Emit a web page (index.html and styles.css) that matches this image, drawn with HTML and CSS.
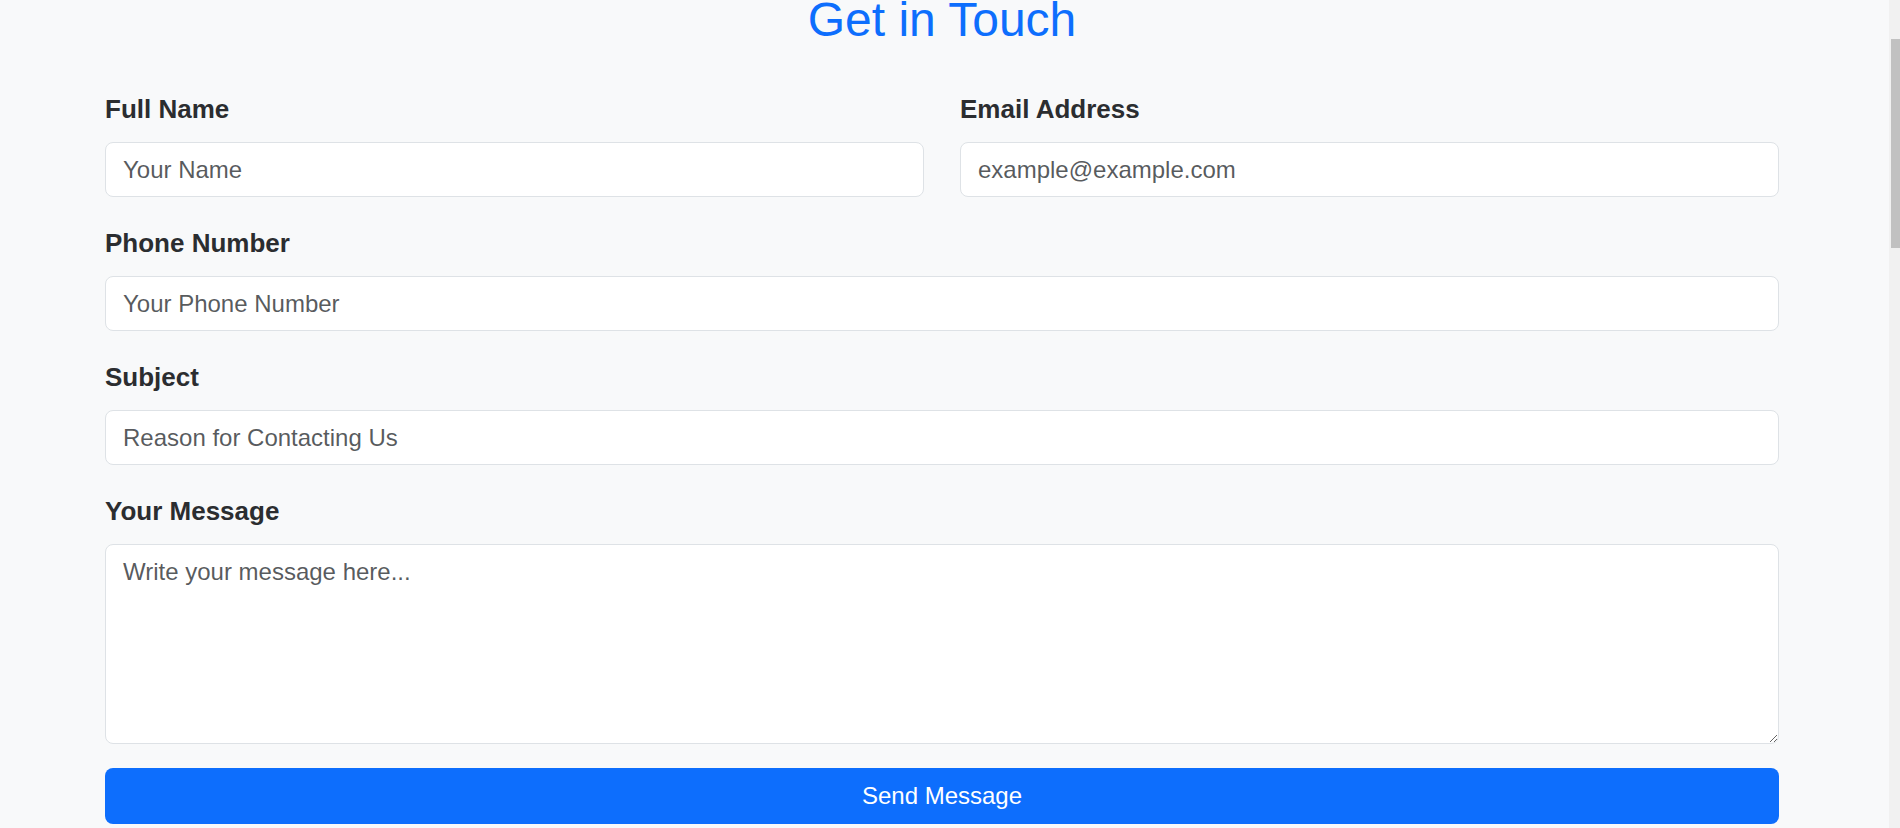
FILE: index.html
```html
<!DOCTYPE html>
<html lang="en">
<head>
<meta charset="utf-8">
<title>Get in Touch</title>
<link rel="stylesheet" href="styles.css">
</head>
<body>
<div class="window">
  <main class="main">
    <h1 class="title">Get in Touch</h1>
    <form class="form">
      <div class="row-2">
        <div class="field">
          <label class="label" for="name">Full Name</label>
          <input class="control" id="name" type="text" placeholder="Your Name">
        </div>
        <div class="field">
          <label class="label" for="email">Email Address</label>
          <input class="control" id="email" type="email" placeholder="example@example.com">
        </div>
      </div>
      <div class="field">
        <label class="label" for="phone">Phone Number</label>
        <input class="control" id="phone" type="tel" placeholder="Your Phone Number">
      </div>
      <div class="field">
        <label class="label" for="subject">Subject</label>
        <input class="control" id="subject" type="text" placeholder="Reason for Contacting Us">
      </div>
      <div class="field field-last">
        <label class="label" for="message">Your Message</label>
        <textarea class="control control-area" id="message" placeholder="Write your message here..."></textarea>
      </div>
      <button class="send" type="button">Send Message</button>
    </form>
  </main>
  <div class="scrollbar"><div class="thumb"></div></div>
</div>
</body>
</html>
```

FILE: styles.css
```css
html, body {
  margin: 0;
  padding: 0;
  height: 828px;
  overflow: hidden;
  background: #f8f9fa;
}

.window {
  display: flex;
  height: 828px;
  font-family: "Liberation Sans", Arial, sans-serif;
}

.main {
  flex: 1;
  padding: 0 110px 0 105px;
  min-width: 0;
}

.title {
  margin: 2px 0 52px;
  font-size: 48px;
  line-height: 36px;
  font-weight: 400;
  color: #0d6efd;
  text-align: center;
}

.form {
  display: flex;
  flex-direction: column;
}

.row-2 {
  display: grid;
  grid-template-columns: 1fr 1fr;
  column-gap: 36px;
}

.field {
  display: flex;
  flex-direction: column;
  margin-bottom: 27px;
}

.field-last {
  margin-bottom: 24px;
}

.label {
  font-size: 26px;
  line-height: 38px;
  font-weight: 700;
  color: #2b2d30;
  margin-bottom: 14px;
}

.control {
  box-sizing: border-box;
  height: 55px;
  padding: 0 17px;
  border: 1px solid #dee2e6;
  border-radius: 8px;
  background: #fff;
  font-family: "Liberation Sans", Arial, sans-serif;
  font-size: 24px;
  line-height: 36px;
  color: #212529;
  outline: none;
}

.control::placeholder {
  color: rgba(33, 37, 41, 0.75);
  opacity: 1;
}

.control-area {
  height: 200px;
  padding: 9px 17px;
  resize: vertical;
}

.send {
  box-sizing: border-box;
  height: 56px;
  border: 0;
  border-radius: 8px;
  background: #0d6efd;
  color: #fff;
  font-family: "Liberation Sans", Arial, sans-serif;
  font-size: 24px;
  line-height: 36px;
  padding: 0;
}

.scrollbar {
  width: 11px;
  background: #f1f1f1;
  display: flex;
  flex-direction: column;
  align-items: flex-end;
}

.thumb {
  width: 9px;
  height: 209px;
  margin-top: 39px;
  background: #c1c1c1;
}
```
